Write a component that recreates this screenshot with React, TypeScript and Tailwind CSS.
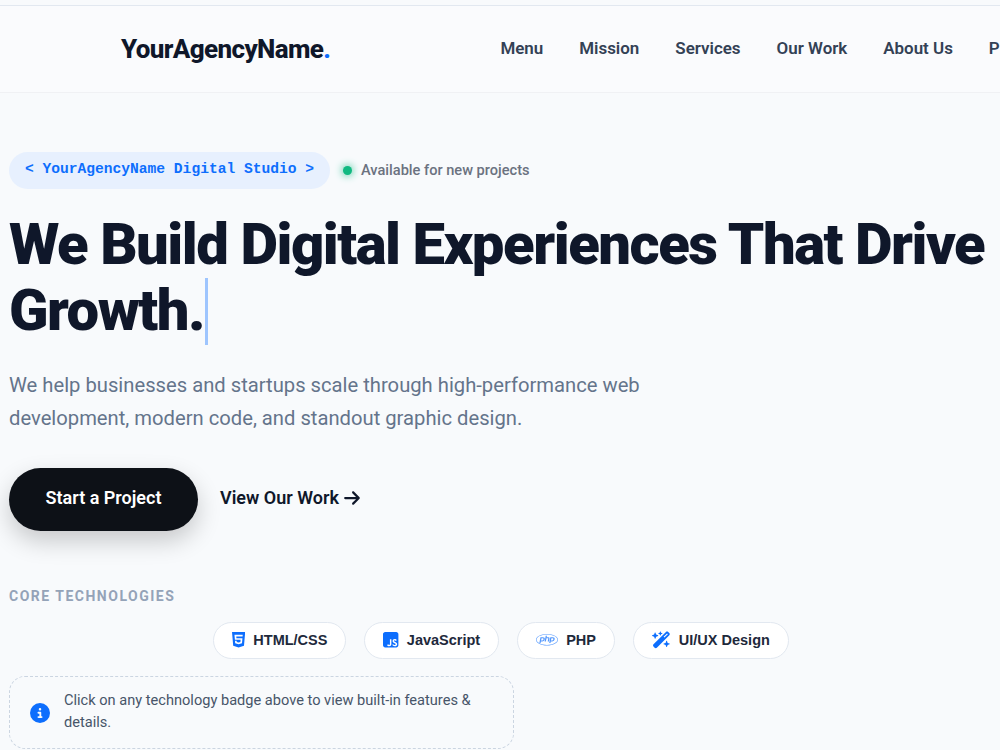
import type { ReactNode } from 'react';
import { FaArrowRight, FaCircleInfo, FaHtml5, FaPhp, FaSquareJs, FaWandMagicSparkles } from 'react-icons/fa6';

const navItems = ['Menu', 'Mission', 'Services', 'Our Work', 'About Us', 'Pricing'];

function TechBadge({ icon, label }: { icon: ReactNode; label: string }) {
  return (
    <button className="flex h-[37px] items-center gap-[8px] rounded-full border border-[#e2e8f0] bg-white px-[18px] font-['Liberation_Sans',sans-serif] text-[14.5px] font-bold text-[#1e293b]">
      <span className="-mt-px flex text-[17.6px] text-[#0d6efd]">{icon}</span>
      {label}
    </button>
  );
}

export default function App() {
  return (
    <div className="h-[750px] w-[1000px] overflow-hidden bg-[#f8fafc] font-['Roboto',sans-serif]">
      <div className="h-[6px] border-b border-[#e2e8f0]" />

      {/* Header */}
      <header className="flex h-[87px] items-center gap-[170px] border-b border-[#f0f1f4] bg-[#fafbfd] pl-[121px]">
        <div className="shrink-0 text-[26px] font-extrabold tracking-[-0.63px] text-[#0f172a]">
          YourAgencyName<span className="text-[#0d6efd]">.</span>
        </div>
        <nav className="flex shrink-0 gap-9">
          {navItems.map((item) => (
            <a key={item} className="text-[16.95px] font-semibold text-[#334155]">
              {item}
            </a>
          ))}
        </nav>
      </header>

      {/* Hero */}
      <main className="pl-[9px] pt-[59px]">
        <div className="flex items-center gap-[12px]">
          <span className="flex h-[37px] w-[321px] items-center justify-center rounded-full bg-[#e7f0fe] pb-[2px] font-['Liberation_Mono',monospace] text-[14.6px] font-bold text-[#0d6efd]">
            {'< YourAgencyName Digital Studio >'}
          </span>
          <span className="-ml-px flex items-center gap-[9px] text-[14.6px] font-medium text-[#6b7280]">
            <span className="ml-[2px] size-[9px] rounded-full bg-[#10b981] shadow-[0_0_8px_#10b981]" />
            Available for new projects
          </span>
        </div>

        <h1 className="mt-[22px] w-[985px] text-[58px] font-black leading-[66px] tracking-[-1.48px] text-[#0f172a]">
          We Build Digital Experiences That Drive Growth.
          <span className="ml-px mt-px inline-block h-[67px] w-[3px] bg-[#9ec5fe] align-top" />
        </h1>

        <p className="mt-[24px] w-[680px] text-[20.22px] leading-[33px] text-[#64748b]">
          We help businesses and startups scale through high-performance web development, modern code, and standout graphic design.
        </p>

        <div className="mt-[33px] flex items-center gap-[22px]">
          <button className="h-[63px] w-[189px] rounded-full bg-[#0d1117] pb-[4px] text-[18px] font-semibold text-white shadow-[0_10px_25px_rgba(0,0,0,0.2)]">
            Start a Project
          </button>
          <a className="flex items-center gap-1 pb-[4px] text-[18px] font-semibold text-[#0f172a]">
            View Our Work
            <FaArrowRight className="text-[18px]" />
          </a>
        </div>

        <div className="mt-[55px] text-[14px] font-bold tracking-[1.5px] text-[#94a3b8]">CORE TECHNOLOGIES</div>

        <div className="mt-[15px] flex w-[984px] justify-center gap-[18px]">
          <TechBadge icon={<FaHtml5 className="w-[13.2px]" />} label="HTML/CSS" />
          <TechBadge icon={<FaSquareJs className="w-[15.4px]" />} label="JavaScript" />
          <TechBadge icon={<FaPhp className="w-[22px] opacity-70" />} label="PHP" />
          <TechBadge icon={<FaWandMagicSparkles className="w-[18.8px]" />} label="UI/UX Design" />
        </div>

        <div className="mt-[17px] flex h-[73px] w-[505px] items-center gap-[14px] rounded-[16px] border border-dashed border-[#cbd5e1] pl-5 pr-4">
          <FaCircleInfo className="shrink-0 text-[20px] text-[#0d6efd]" />
          <p className="pb-[4px] text-[14.6px] leading-[22px] text-[#475569]">
            Click on any technology badge above to view built-in features & details.
          </p>
        </div>
      </main>
    </div>
  );
}
